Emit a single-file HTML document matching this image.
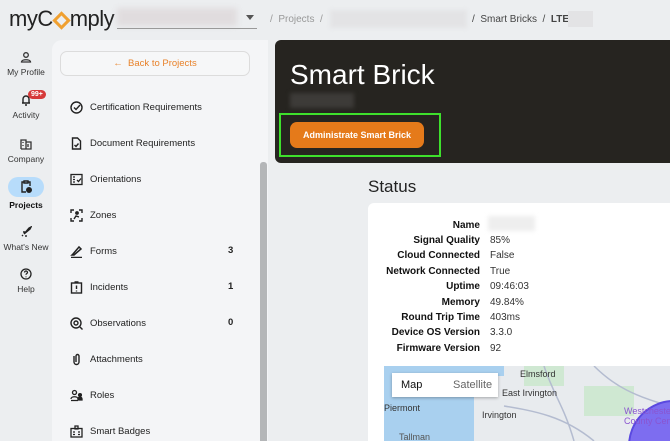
<!DOCTYPE html>
<html><head><style>
*{box-sizing:border-box;margin:0;padding:0}
html,body{width:670px;height:441px;overflow:hidden}
body{background:#eceef0;font-family:"Liberation Sans",sans-serif;position:relative;color:#222}
.abs{position:absolute}
.nav{position:absolute;left:0;width:52px;text-align:center;font-size:8.5px;color:#333}
.nav svg{display:block;margin:0 auto 4px}
.side{position:absolute;left:52px;top:40px;width:216px;height:401px;background:#f4f5f7;border-top-left-radius:10px}
.item{position:absolute;left:70px;font-size:9.5px;color:#222;display:flex;align-items:center}
.item svg{width:13px;height:13px;margin-right:7px}
.cnt{position:absolute;left:228px;font-size:9.5px;font-weight:bold}
.lbl{position:absolute;right:190px;text-align:right;font-weight:bold;font-size:10px;color:#111}
.val{position:absolute;left:490px;font-size:10px;color:#333}
</style></head><body>
<div class="abs" style="left:9px;top:6px;font-size:22px;color:#222;letter-spacing:-0.5px">myC<span style="display:inline-block;width:13px;height:13px;border:3px solid #f0a030;transform:rotate(45deg);margin:0 2px -1px"></span>mply</div>
<div class="abs" style="left:117px;top:8px;width:120px;height:18px;background:#e0dcde;filter:blur(3px)"></div>
<div class="abs" style="left:117px;top:28px;width:140px;height:1px;background:#999"></div>
<div class="abs" style="left:246px;top:15px;width:0;height:0;border:4px solid transparent;border-top:5px solid #555"></div>
<div class="abs" style="left:270px;top:14px;font-size:10px;color:#999">/ &nbsp;Projects &nbsp;/</div>
<div class="abs" style="left:330px;top:10px;width:137px;height:18px;background:#e3e3e5;filter:blur(2px)"></div>
<div class="abs" style="left:472px;top:14px;font-size:10px;color:#444">/ &nbsp;Smart Bricks &nbsp;/ &nbsp;<b>LTE</b></div>
<div class="abs" style="left:568px;top:11px;width:25px;height:16px;background:#e3e3e5"></div>

<div class="nav" style="top:51px"><svg width="12" height="12" viewBox="0 0 12 12" fill="none" stroke="#333" stroke-width="1.3"><circle cx="6" cy="4" r="2.3"/><path d="M1.5 11c0-3 9-3 9 0z"/></svg>My Profile</div>
<div class="nav" style="top:94px"><svg width="12" height="12" viewBox="0 0 12 12" fill="none" stroke="#222" stroke-width="1.4"><path d="M3 9V5a3 3 0 016 0v4zM2 9h8M5 11h2"/></svg>Activity</div>
<div class="abs" style="left:28px;top:90px;background:#d63a3a;color:#fff;font-size:7px;font-weight:bold;border-radius:6px;padding:1px 3px">99+</div>
<div class="nav" style="top:138px"><svg width="12" height="12" viewBox="0 0 12 12" fill="none" stroke="#333" stroke-width="1.3"><path d="M1 11V2h5v9M6 4h5v7H1M3 4v1M3 7v1M8 6v3"/></svg>Company</div>
<div class="abs" style="left:8px;top:177px;width:36px;height:20px;border-radius:10px;background:#b7dcfb"></div>
<div class="nav" style="top:180px;font-weight:bold;color:#111"><svg width="12" height="13" viewBox="0 0 12 13" fill="none" stroke="#222" stroke-width="1.4"><path d="M4 2H2v10h4M8 2h2v4M4 1h4v2H4z"/><circle cx="9" cy="10" r="2.3" fill="#222"/></svg><span style="position:relative;top:3px">Projects</span></div>
<div class="nav" style="top:226px"><svg width="12" height="12" viewBox="0 0 12 12" fill="none" stroke="#222" stroke-width="1.4"><path d="M4 8l5-6 2-1-1 2-6 5zM3 6l2 0M6 9v2M2 10l1-1"/></svg>What's New</div>
<div class="nav" style="top:268px"><svg width="12" height="12" viewBox="0 0 12 12" fill="none" stroke="#222" stroke-width="1.3"><circle cx="6" cy="6" r="5"/><path d="M4.5 4.5a1.5 1.5 0 113 0c0 1-1.5 1-1.5 2.2M6 8.5v.8"/></svg>Help</div>

<div class="side"></div>
<div class="abs" style="left:60px;top:51px;width:190px;height:25px;border:1px solid #dcdcdc;border-radius:7px;background:#f6f7f8;text-align:center;line-height:23px;font-size:9.5px;color:#e8822a">←&nbsp; Back to Projects</div>
<div class="abs" style="left:260px;top:162px;width:7px;height:279px;background:#b4b6b8;border-radius:3px 3px 0 0"></div>

<div class="item" style="top:101px"><svg viewBox="0 0 13 13" fill="none" stroke="#222" stroke-width="1.4"><circle cx="6.5" cy="6.5" r="5.5"/><path d="M4 6.5l2 2 4-4.5"/></svg>Certification Requirements</div>
<div class="item" style="top:137px"><svg viewBox="0 0 13 13" fill="none" stroke="#222" stroke-width="1.4"><path d="M2.5 1h5l3 3v8h-8z M4.5 8l1.5 1.5 2.5-3"/></svg>Document Requirements</div>
<div class="item" style="top:173px"><svg viewBox="0 0 13 13" fill="none" stroke="#222" stroke-width="1.3"><rect x="1" y="1.5" width="11" height="10"/><path d="M3 4h2M3 6.5h2M3 9h2M7 7l1.5 1.5 2.5-3"/></svg>Orientations</div>
<div class="item" style="top:209px"><svg viewBox="0 0 13 13" fill="none" stroke="#222" stroke-width="1.4"><path d="M1 4V1h3M9 1h3v3M12 9v3H9M4 12H1V9"/><circle cx="7" cy="4" r="1.2" fill="#222"/><path d="M4 10l2-3 3 1"/></svg>Zones</div>
<div class="item" style="top:245px"><svg viewBox="0 0 13 13" fill="none" stroke="#222" stroke-width="1.5"><path d="M3 9l6-7 2 2-7 6-2 0zM1 12.5h11"/></svg>Forms</div><div class="cnt" style="top:245px">3</div>
<div class="item" style="top:281px"><svg viewBox="0 0 13 13" fill="none" stroke="#222" stroke-width="1.4"><rect x="1.5" y="2" width="10" height="10"/><path d="M4.5 1h4M6.5 4.5v3.5M6.5 9.5v1"/></svg>Incidents</div><div class="cnt" style="top:281px">1</div>
<div class="item" style="top:317px"><svg viewBox="0 0 13 13" fill="none" stroke="#222" stroke-width="1.4"><circle cx="6" cy="6" r="5"/><circle cx="6" cy="6" r="2"/><path d="M10 10l2.5 2.5"/></svg>Observations</div><div class="cnt" style="top:317px">0</div>
<div class="item" style="top:353px"><svg viewBox="0 0 13 13" fill="none" stroke="#222" stroke-width="1.4"><path d="M4 3v6a2.5 2.5 0 005 0V3a1.5 1.5 0 00-3 0v6"/></svg>Attachments</div>
<div class="item" style="top:389px"><svg viewBox="0 0 13 13" fill="none" stroke="#222" stroke-width="1.3"><circle cx="4.5" cy="3.5" r="2"/><path d="M1 10c0-3 7-3 7 0M1 11.5h7"/><circle cx="10" cy="6" r="1.4" fill="#222"/><path d="M8 11h4v-1a2 2 0 00-4 0z" fill="#222"/></svg>Roles</div>
<div class="item" style="top:425px"><svg viewBox="0 0 13 13" fill="none" stroke="#222" stroke-width="1.3"><rect x="1" y="3.5" width="11" height="8.5"/><path d="M5 1h3v3H5zM3 7h2M3 9.5h2M8 7h2M8 9.5h2"/></svg>Smart Badges</div>

<div class="abs" style="left:275px;top:40px;width:395px;height:123px;background:#262420;border-radius:6px 0 0 6px"></div>
<div class="abs" style="left:290px;top:59px;font-size:28px;color:#fff">Smart Brick</div>
<div class="abs" style="left:290px;top:93px;width:64px;height:15px;background:#3d3b38;filter:blur(2px)"></div>
<div class="abs" style="left:279px;top:113px;width:162px;height:44px;border:2.5px solid #3ee02c"></div>
<div class="abs" style="left:290px;top:122px;width:134px;height:26px;border-radius:7px;background:#e57a1a;color:#fff;font-size:9px;font-weight:bold;text-align:center;line-height:26px">Administrate Smart Brick</div>

<div class="abs" style="left:368px;top:177px;font-size:17px;color:#222">Status</div>
<div class="abs" style="left:368px;top:203px;width:302px;height:238px;background:#fff;border-radius:6px 0 0 0"></div>
<div class="lbl" style="top:220px">Name</div><div class="abs" style="left:488px;top:216px;width:47px;height:15px;background:#eee;filter:blur(2px)"></div>
<div class="lbl" style="top:235px">Signal Quality</div><div class="val" style="top:235px">85%</div>
<div class="lbl" style="top:250px">Cloud Connected</div><div class="val" style="top:250px">False</div>
<div class="lbl" style="top:266px">Network Connected</div><div class="val" style="top:266px">True</div>
<div class="lbl" style="top:281px">Uptime</div><div class="val" style="top:281px">09:46:03</div>
<div class="lbl" style="top:297px">Memory</div><div class="val" style="top:297px">49.84%</div>
<div class="lbl" style="top:312px">Round Trip Time</div><div class="val" style="top:312px">403ms</div>
<div class="lbl" style="top:327px">Device OS Version</div><div class="val" style="top:327px">3.3.0</div>
<div class="lbl" style="top:343px">Firmware Version</div><div class="val" style="top:343px">92</div>

<div class="abs" style="left:384px;top:366px;width:286px;height:75px;background:#e8ebee;overflow:hidden">
<svg width="286" height="75" style="position:absolute;left:0;top:0">
<path d="M0 0h120v10h-30v65H0z" fill="#a9d0ef"/>
<path d="M140 0h40v20h-40zM200 20h50v30h-50z" fill="#cfe8d2"/>
<path d="M160 0c10 30 20 40 30 75M210 0c20 20 40 30 76 40M120 40c30 5 60 10 90 35" stroke="#b4bcd0" stroke-width="1.5" fill="none"/>
<circle cx="290" cy="80" r="45" fill="#7d6df0" stroke="#5a49e0" stroke-width="2"/>
</svg>
<div class="abs" style="left:8px;top:7px;width:106px;height:24px;background:#fff;box-shadow:0 1px 3px rgba(0,0,0,.3);font-size:11px;line-height:24px"><span style="position:absolute;left:9px;color:#111">Map</span><span style="position:absolute;left:61px;color:#666">Satellite</span></div>
<div class="abs" style="left:136px;top:3px;font-size:9px;color:#333">Elmsford</div>
<div class="abs" style="left:118px;top:22px;font-size:9px;color:#333">East Irvington</div>
<div class="abs" style="left:0px;top:37px;font-size:9px;color:#333">Piermont</div>
<div class="abs" style="left:98px;top:44px;font-size:9px;color:#333">Irvington</div>
<div class="abs" style="left:15px;top:66px;font-size:9px;color:#555">Tallman</div>
<div class="abs" style="left:240px;top:40px;font-size:9px;color:#8a55d0;line-height:10px;white-space:nowrap">Westchester<br>County Center</div>
</div>
</body></html>
